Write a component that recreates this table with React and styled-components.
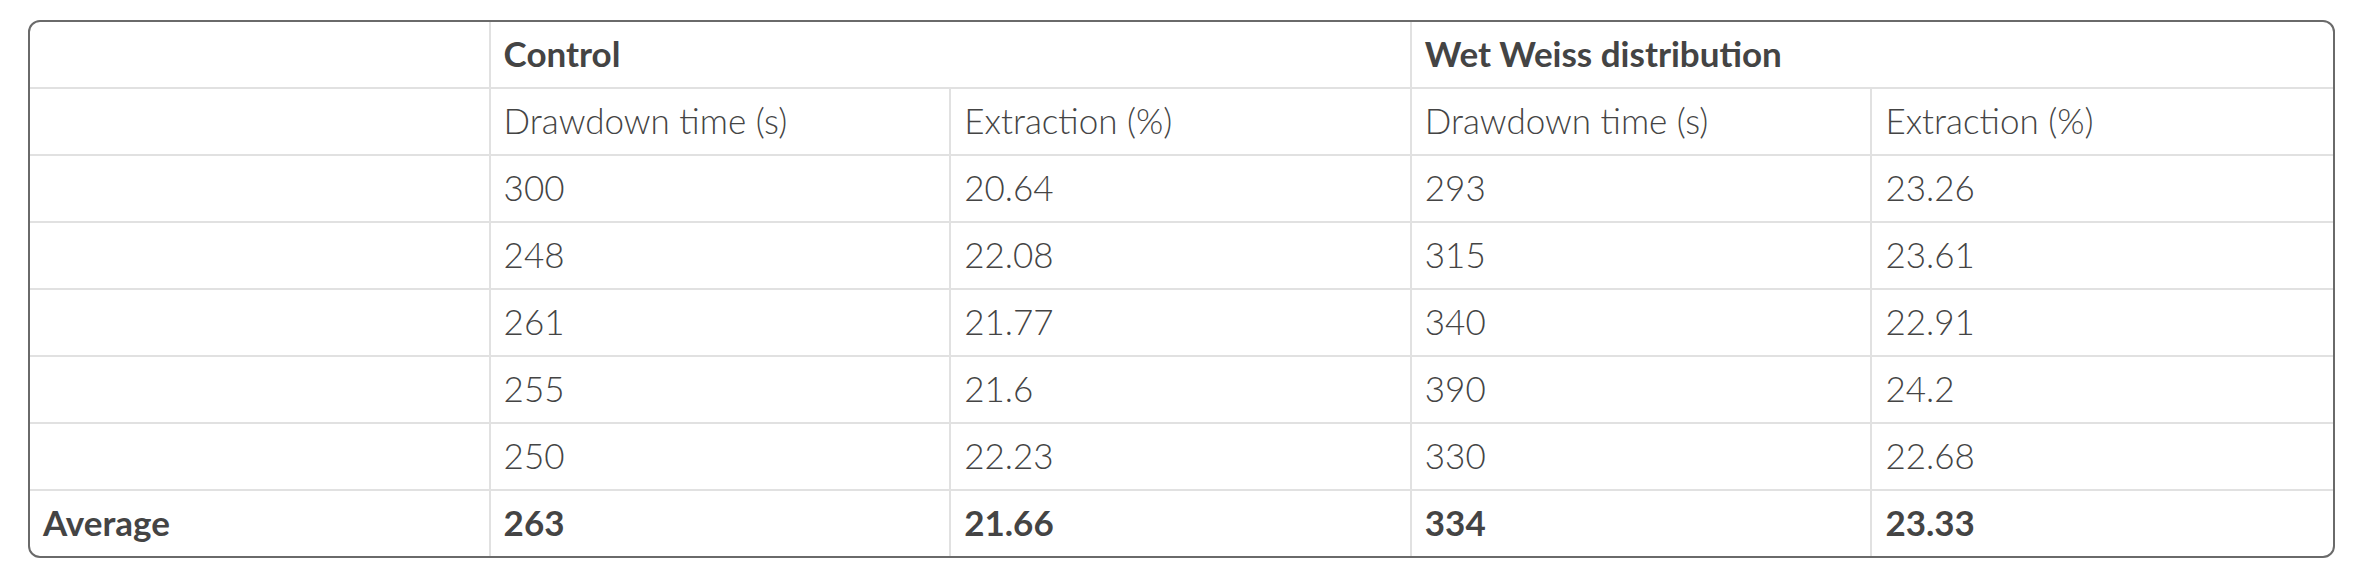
import React from 'react';
import styled, { createGlobalStyle } from 'styled-components';

const GlobalStyle = createGlobalStyle`
  html, body {
    margin: 0;
    padding: 0;
    background: #ffffff;
  }
  body {
    font-family: Lato, 'Noto Sans', sans-serif;
    color: #444444;
  }
`;

const Page = styled.div`
  padding: 20px 29px 0 28px;
`;

const Frame = styled.div`
  border: 2px solid #6a6a6a;
  border-radius: 12px;
  overflow: hidden;
`;

const Table = styled.table`
  width: 100%;
  table-layout: fixed;
  border-collapse: separate;
  border-spacing: 0;
`;

const Row = styled.tr`
  &:last-child td {
    border-bottom: none;
    height: 65px;
  }
`;

const Cell = styled.td`
  height: 67px;
  box-sizing: border-box;
  padding: 0 12px 3px 13px;
  vertical-align: middle;
  font-size: 35px;
  line-height: 42px;
  font-weight: ${(p) => (p.$bold ? 700 : 300)};
  color: #444444;
  border-right: 2px solid #e1e1e1;
  border-bottom: 2px solid #e1e1e1;
  white-space: nowrap;

  &:last-child {
    border-right: none;
  }
`;

const samples = [
  ['300', '20.64', '293', '23.26'],
  ['248', '22.08', '315', '23.61'],
  ['261', '21.77', '340', '22.91'],
  ['255', '21.6', '390', '24.2'],
  ['250', '22.23', '330', '22.68'],
];

const average = ['263', '21.66', '334', '23.33'];

export default function App() {
  return (
    <>
      <GlobalStyle />
      <Page>
        <Frame>
          <Table>
            <tbody>
              <Row>
                <Cell />
                <Cell $bold colSpan={2}>Control</Cell>
                <Cell $bold colSpan={2}>Wet Weiss distribution</Cell>
              </Row>
              <Row>
                <Cell />
                <Cell>Drawdown time (s)</Cell>
                <Cell>Extraction (%)</Cell>
                <Cell>Drawdown time (s)</Cell>
                <Cell>Extraction (%)</Cell>
              </Row>
              {samples.map((r, i) => (
                <Row key={i}>
                  <Cell />
                  {r.map((v, j) => (
                    <Cell key={j}>{v}</Cell>
                  ))}
                </Row>
              ))}
              <Row>
                <Cell $bold>Average</Cell>
                {average.map((v, j) => (
                  <Cell $bold key={j}>{v}</Cell>
                ))}
              </Row>
            </tbody>
          </Table>
        </Frame>
      </Page>
    </>
  );
}
